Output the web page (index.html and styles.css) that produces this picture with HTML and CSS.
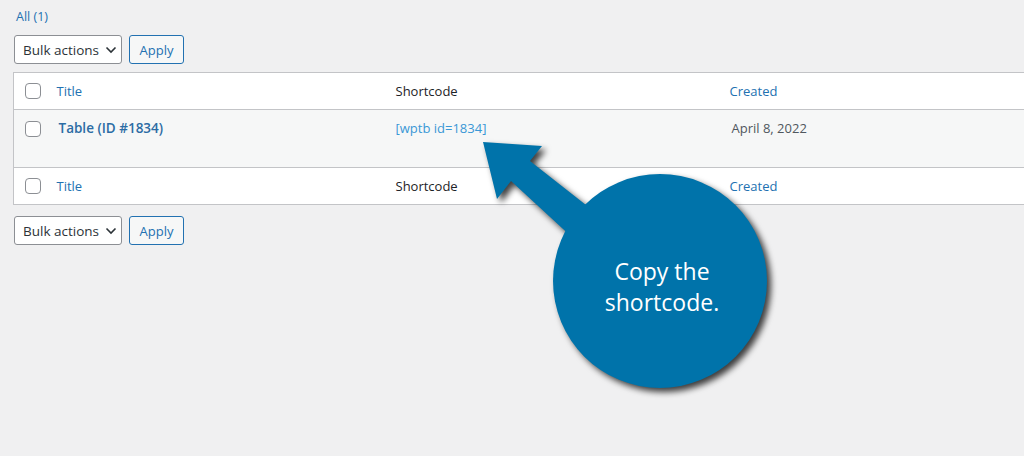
FILE: index.html
```html
<!DOCTYPE html>
<html lang="en">
<head>
    <meta charset="UTF-8">
    <meta name="viewport" content="width=device-width, initial-scale=1.0">
    <title>Tables</title>
    <link rel="stylesheet" href="styles.css">
</head>
<body>
    <div class="wrap">
        <ul class="views">
            <li><a href="#">All <span class="count">(1)</span></a></li>
        </ul>

        <div class="tablenav">
            <div class="select">Bulk actions
                <svg class="chevron" width="12" height="8" viewBox="0 0 12 8"><path d="M1.5 1.5 L6 6 L10.5 1.5" fill="none" stroke="#2c3338" stroke-width="1.6"/></svg>
            </div>
            <button class="apply">Apply</button>
        </div>

        <table class="list-table">
            <colgroup>
                <col class="col-check">
                <col class="col-title">
                <col class="col-short">
                <col>
            </colgroup>
            <thead>
                <tr>
                    <td class="check"><span class="box"></span></td>
                    <th><a href="#">Title</a></th>
                    <th>Shortcode</th>
                    <th><a href="#">Created</a></th>
                </tr>
            </thead>
            <tbody>
                <tr class="row">
                    <td class="check"><span class="box"></span></td>
                    <td><a href="#" class="row-title">Table (ID #1834)</a></td>
                    <td><span class="shortcode">[wptb id=1834]</span></td>
                    <td class="date">April 8, 2022</td>
                </tr>
            </tbody>
            <tfoot>
                <tr>
                    <td class="check"><span class="box"></span></td>
                    <th><a href="#">Title</a></th>
                    <th>Shortcode</th>
                    <th><a href="#">Created</a></th>
                </tr>
            </tfoot>
        </table>

        <div class="tablenav bottom">
            <div class="select">Bulk actions
                <svg class="chevron" width="12" height="8" viewBox="0 0 12 8"><path d="M1.5 1.5 L6 6 L10.5 1.5" fill="none" stroke="#2c3338" stroke-width="1.6"/></svg>
            </div>
            <button class="apply">Apply</button>
        </div>
    </div>

    <!-- callout drawn over the table -->
    <div class="callout">
        <svg class="callout-shape" width="1024" height="456" viewBox="0 0 1024 456">
            <polygon points="483,142 542,146 530,161 600,216 575,240 511,181 497,199" fill="#0073aa"/>
            <circle cx="660" cy="281" r="107" fill="#0073aa"/>
        </svg>
        <div class="callout-text">Copy the<br>shortcode.</div>
    </div>
</body>
</html>
```

FILE: styles.css
```css
html, body {
    margin: 0;
    padding: 0;
}
body {
    background-color: #f0f0f1;
    font-family: "Open Sans", "Noto Sans", sans-serif;
    font-size: 13px;
    color: #3c434a;
    width: 1024px;
    height: 456px;
    overflow: hidden;
    position: relative;
}
a {
    color: #2271b1;
    text-decoration: none;
}
.wrap {
    padding-left: 13px;
}
.views {
    list-style: none;
    margin: 0;
    padding: 7px 0 0 3px;
    height: 20px;
    line-height: 20px;
    font-size: 12.5px;
}
.tablenav {
    display: flex;
    gap: 7px;
    margin-top: 8px;
    height: 29px;
}
.tablenav.bottom {
    margin-top: 11px;
}
.select {
    box-sizing: border-box;
    width: 108px;
    height: 29px;
    margin-left: 1px;
    border: 1px solid #8c8f94;
    border-radius: 3px;
    background-color: #fff;
    color: #2c3338;
    font-size: 13.5px;
    padding-left: 8px;
    display: flex;
    align-items: center;
    gap: 6px;
}
.apply {
    box-sizing: border-box;
    height: 29px;
    width: 55px;
    padding: 0;
    border: 1px solid #2271b1;
    border-radius: 3px;
    background-color: #f6f7f7;
    color: #2271b1;
    font-family: inherit;
    font-size: 13px;
}
.list-table {
    margin-top: 8px;
    width: 1030px;
    border-collapse: collapse;
    table-layout: fixed;
    background-color: #fff;
    border: 1px solid #c3c4c7;
}
.col-check {
    width: 35px;
}
.col-title {
    width: 339px;
}
.col-short {
    width: 334px;
}
.list-table th,
.list-table td {
    text-align: left;
    font-weight: normal;
    padding: 0 8px;
    height: 36px;
    line-height: 20px;
    color: #1d2327;
}
.list-table thead tr {
    border-bottom: 1px solid #c3c4c7;
}
.list-table tfoot tr {
    border-top: 1px solid #c3c4c7;
}
.list-table .check {
    padding: 0 0 0 11px;
}
.box {
    display: block;
    box-sizing: border-box;
    width: 16px;
    height: 16px;
    border: 1px solid #8c8f94;
    border-radius: 4px;
    background-color: #fff;
}
.row {
    background-color: #f6f7f7;
}
.row td {
    height: 49px;
    vertical-align: top;
    padding-top: 8px;
    padding-bottom: 0;
}
.row td.check {
    padding-top: 8px;
}
.row .box {
    margin-top: 3px;
}
.row-title {
    font-weight: 600;
    font-size: 13.5px;
    margin-left: 2px;
    color: #2c6ca4;
}
.shortcode {
    color: #3a98d6;
}
.date {
    padding-left: 10px !important;
    color: #50575e !important;
}
.callout {
    position: absolute;
    left: 0;
    top: 0;
    width: 1024px;
    height: 456px;
    pointer-events: none;
}
.callout-shape {
    filter: drop-shadow(4px 4px 3px rgba(0, 0, 0, 0.75));
}
.callout-text {
    position: absolute;
    left: 560px;
    top: 256px;
    width: 204px;
    text-align: center;
    color: #fff;
    font-size: 23px;
    line-height: 31px;
}
```
